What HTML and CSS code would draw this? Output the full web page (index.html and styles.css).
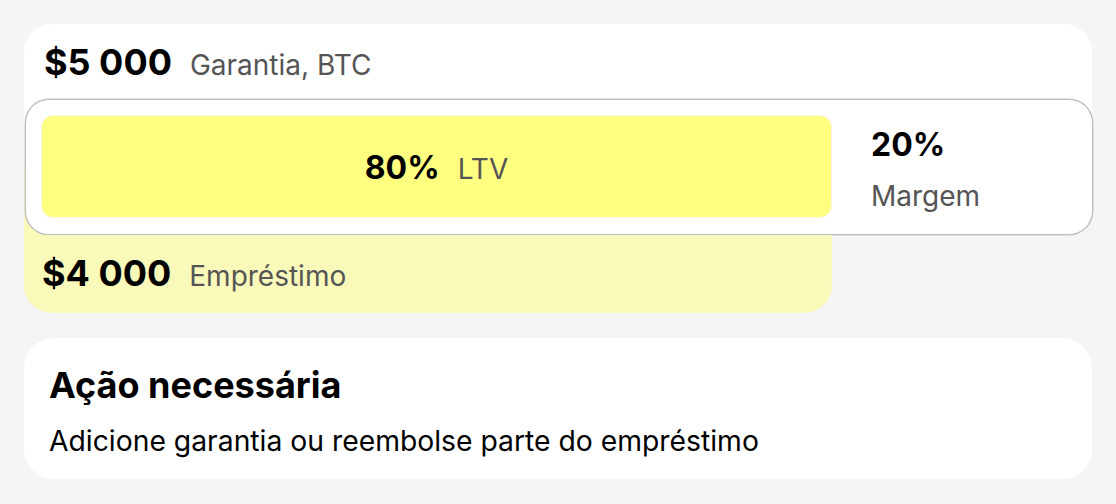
FILE: index.html
```html
<!DOCTYPE html>
<html lang="pt">
<head>
<meta charset="utf-8">
<link rel="stylesheet" href="styles.css">
</head>
<body>
<main class="page">
  <section class="position">
    <div class="collateral">
      <span class="amount">$5 000</span>
      <span class="label">Garantia, BTC</span>
    </div>
    <div class="ratio-wrap">
      <div class="ratio">
        <div class="ltv">
          <span class="pct">80%</span>
          <span class="label">LTV</span>
        </div>
        <div class="margin">
          <span class="pct">20%</span>
          <span class="label">Margem</span>
        </div>
      </div>
    </div>
    <div class="loan">
      <span class="amount">$4 000</span>
      <span class="label">Empréstimo</span>
    </div>
  </section>
  <section class="action">
    <h2 class="action-title">Ação necessária</h2>
    <p class="action-text">Adicione garantia ou reembolse parte do empréstimo</p>
  </section>
</main>
</body>
</html>
```
FILE: styles.css
```css
* { box-sizing: border-box; }
html, body { margin: 0; padding: 0; }
body {
  background: #f5f5f5;
  font-family: Inter, "Noto Sans", sans-serif;
  color: #000;
}
.page {
  padding: 24px;
  display: flex;
  flex-direction: column;
  gap: 25px;
}
.position {
  display: flex;
  flex-direction: column;
}
.collateral {
  background: #fff;
  border-radius: 28px 28px 0 0;
  padding: 17.5px 20px;
  display: flex;
  align-items: baseline;
  gap: 18px;
  height: 75px;
}
.amount {
  font-size: 36px;
  font-weight: 700;
  line-height: 40px;
  color: #000;
}
.pct {
  font-size: 32px;
  font-weight: 700;
  line-height: 40px;
  color: #000;
}
.label {
  font-size: 28px;
  font-weight: 400;
  line-height: 34px;
  color: #555;
}
.ratio-wrap {
  background:
    linear-gradient(#fff, #fff) top left / 100% 50% no-repeat,
    linear-gradient(#f9f9ba, #f9f9ba) bottom left / 808px 50% no-repeat;
}
.ratio {
  margin: 0 -1px 0 1px;
  height: 136px;
  background: #fff;
  border: 1px solid #bdbdbd;
  box-shadow: 0 0 0 0.5px #c8c8c8;
  border-radius: 24px;
  padding: 15px 15px 16px;
  display: flex;
  align-items: flex-start;
  gap: 39px;
}
.ltv {
  width: 791px;
  height: 103px;
  background: #ffff80;
  border: 1px solid #f6f6e6;
  border-radius: 12px;
  display: flex;
  align-items: baseline;
  justify-content: center;
  padding-top: 32px;
  gap: 18px;
}
.margin {
  display: flex;
  flex-direction: column;
  gap: 13px;
  padding-top: 10px;
}
.margin .label { line-height: 36px; }
.loan {
  width: 808px;
  height: 78px;
  background: #f9f9ba;
  border-radius: 0 0 28px 28px;
  padding: 17.5px 18px 0;
  display: flex;
  align-items: baseline;
  gap: 18px;
}
.action {
  background: #fff;
  border-radius: 30px;
  padding: 27px 25px 20px;
}
.action-title {
  margin: 0;
  font-size: 36px;
  font-weight: 700;
  line-height: 40px;
}
.action-text {
  margin: 18px 0 0;
  font-size: 28.3px;
  line-height: 36px;
}
```
